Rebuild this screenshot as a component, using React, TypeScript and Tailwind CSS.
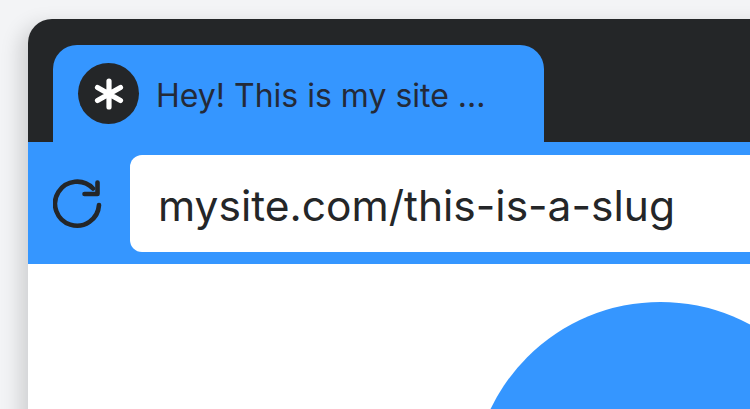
export default function App() {
  return (
    <div className="w-[750px] h-[409px] overflow-hidden bg-[#f3f4f6] pl-[28px] pt-[19px] font-['Inter',sans-serif]">
      <div className="w-[800px] h-[500px] rounded-tl-[24px] bg-[#242628] shadow-[-8px_6px_20px_rgba(0,0,0,0.15)] overflow-hidden flex flex-col">
        <div className="h-[123px] shrink-0 pl-[25px] pt-[26px] flex">
          <div className="w-[491px] h-[97px] rounded-t-[24px] bg-[#3596ff] flex items-start pl-[25px] pt-[18px] gap-[17px]">
            <div className="w-[61px] h-[61px] rounded-full bg-[#242628] flex items-center justify-center shrink-0">
              <svg width="30" height="32" viewBox="0 0 30 32" fill="none" stroke="#fff" strokeWidth="5.2" strokeLinecap="round">
                <path d="M15 3V29M3.5 9.5L26.5 22.5M26.5 9.5L3.5 22.5" />
              </svg>
            </div>
            <span className="text-[32px] leading-[65px] text-[#242a38] whitespace-nowrap">Hey! This is my site ...</span>
          </div>
        </div>
        <div className="h-[122px] shrink-0 bg-[#3596ff] flex items-start pt-[13px] pl-[25px] gap-[28px]">
          <svg className="mt-[24px] shrink-0" width="49" height="50" viewBox="0 0 49 50" fill="none" stroke="#242628" strokeWidth="4.6" strokeLinecap="round" strokeLinejoin="round">
            <path d="M46 26A22 22 0 1 1 40 9.5" />
            <path d="M44.5 3.5V15H31.5" />
          </svg>
          <div className="w-[700px] h-[97px] rounded-l-[12px] bg-white pl-[28px] flex items-center shrink-0">
            <span className="text-[42.5px] leading-none pt-[5px] text-[#242628] whitespace-nowrap">mysite.com/this-is-a-slug</span>
          </div>
        </div>
        <div className="flex-1 bg-white pl-[444px] pt-[38px] overflow-hidden">
          <div className="w-[377px] h-[377px] rounded-full bg-[#3596ff]" />
        </div>
      </div>
    </div>
  );
}
